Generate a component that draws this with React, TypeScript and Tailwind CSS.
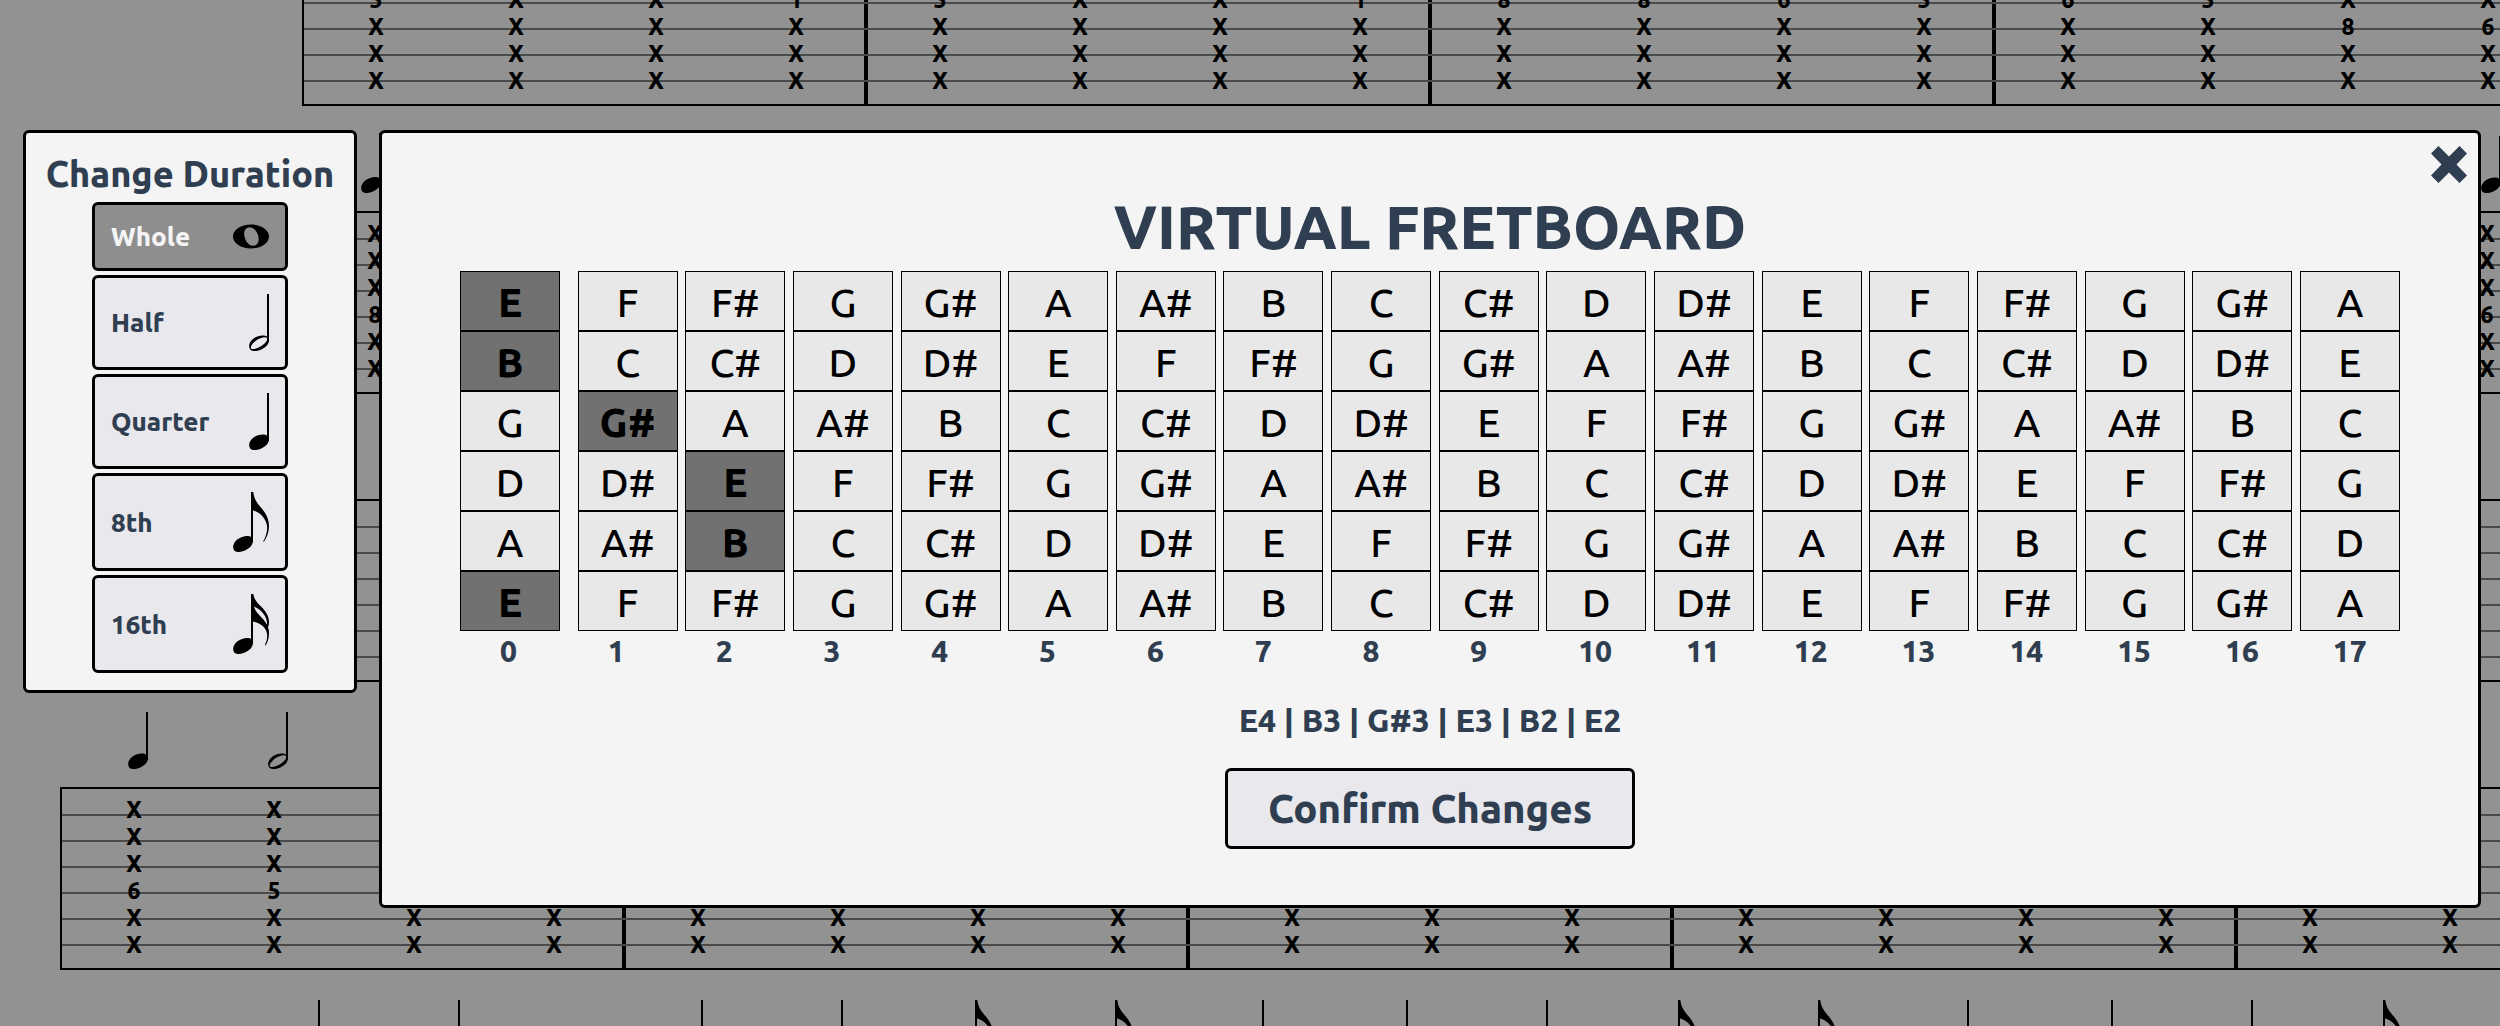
import React from "react";

type Duration = "whole" | "half" | "quarter" | "eighth" | "sixteenth";
type Beat = { d?: Duration; frets?: string };
type Measure = { beats: Beat[] };

function NoteIcon({ kind }: { kind: Duration }) {
  if (kind === "whole")
    return (
      <svg width="36" height="25" viewBox="0 0 36 25" className="shrink-0" aria-hidden="true">
        <path
          fillRule="evenodd"
          d="M18 .5C28 .5 36 5.800 36 12.500S28 24.500 18 24.500 0 19.200 0 12.500 8 .5 18 .5ZM15.500 3.400C11.800 4 10.600 7.500 11.400 12 12.300 17.500 16 22 20.500 21.700 24.800 21.300 26.400 17.500 25.400 12.500 24.300 7 20 2.700 15.500 3.400Z"
        />
      </svg>
    );
  if (kind === "half")
    return (
      <svg width="20" height="57" viewBox="0 0 20 57" className="shrink-0" aria-hidden="true">
        <path d="M18 0H20V48H18Z" />
        <path
          fillRule="evenodd"
          d="M1.200 55.500C-1 52.500.3 47.500 4.500 44.500 9 41.200 15.500 40.500 18.500 43 21 45.500 20.200 50 16 53.300 11.500 57 3.800 58.500 1.200 55.500ZM2.200 54.500C3.700 56 9.500 54 13.500 51.200 17.500 48.400 19.300 45.300 18 43.900 16.300 42.300 10.500 44 6.800 46.800 3 49.600 .9 53.200 2.200 54.500Z"
        />
      </svg>
    );
  if (kind === "quarter")
    return (
      <svg width="20" height="57" viewBox="0 0 20 57" className="shrink-0" aria-hidden="true">
        <path d="M18 0H20V48H18Z" />
        <path d="M1.200 55.500C-1 52.500.3 47.500 4.500 44.500 9 41.200 15.500 40.500 18.500 43 21 45.500 20.200 50 16 53.300 11.500 57 3.800 58.500 1.200 55.500Z" />
      </svg>
    );
  return (
    <svg width="36" height="60" viewBox="0 0 36 60" className="shrink-0" aria-hidden="true">
      <path d="M18 0H20V50H18Z" />
      <path d="M1.200 58.500C-1 55.500.3 50.500 4.500 47.300 9 44 15.500 42.800 18.700 45.500 21 48 20.200 52.500 16 56 11.500 59.800 3.800 61.500 1.200 58.500Z" />
      {kind === "eighth" ? (
        <path d="M19 0H20.300C20.800 5.500 23 10 27.500 15 33 21 36 27 36 34 36 40 34 45 30.800 50L30.200 49.600C33 44.500 34.500 39.500 34 34 33.300 27 27 20 19 18Z" />
      ) : (
        <path
          fillRule="evenodd"
          d="M19 0H20.300C21 5 24 8.500 28 12.500 33 17.500 36 22 36 28 36 30 35.600 32 35 33.500 36 36 36.200 38 36 40 35.800 45 34.500 48.500 32.500 51.500L31.800 51C33.800 47 34.600 43.500 34 39.500 33 33.500 27 28.500 19 27.500ZM21 12.500C22 16.500 25 20 28.500 23.500 31 26 32.800 28.500 33.900 30.800 35 24.500 29.500 16 21 12.500Z"
        />
      )}
    </svg>
  );
}

const b = (frets: string, d?: Duration): Beat => ({ d, frets });
const ALL = "XXXXXX";
const LOW = "    XX";
const empty: Beat = {};

const systems: { lead: string; measures: Measure[] }[] = [
  {
    lead: "w-[302px]",
    measures: [
      { beats: [b("  5XXX"), b("  XXXX"), b("  XXXX"), b("  1XXX")] },
      { beats: [b("  5XXX"), b("  XXXX"), b("  XXXX"), b("  1XXX")] },
      { beats: [b("  8XXX"), b("  8XXX"), b("  6XXX"), b("  5XXX")] },
      { beats: [b("  6XXX"), b("  5XXX"), b("  X8XX"), b("  X6XX")] },
    ],
  },
  {
    lead: "w-[301px]",
    measures: [
      { beats: [b("XXX8XX", "eighth"), empty, empty, empty] },
      { beats: [empty, empty, empty, empty] },
      { beats: [empty, empty, empty, empty] },
      { beats: [empty, empty, empty, b("XXX6XX", "quarter")] },
    ],
  },
  {
    lead: "w-[60px]",
    measures: [
      { beats: [empty, empty, empty, empty] },
      { beats: [empty, empty, empty, empty] },
      { beats: [empty, empty, empty, empty] },
      { beats: [empty, empty, empty, empty] },
      { beats: [empty, empty, empty, empty] },
    ],
  },
  {
    lead: "w-[60px]",
    measures: [
      { beats: [b("XXX6XX", "quarter"), b("XXX5XX", "half"), b(LOW), b(LOW)] },
      { beats: [b(LOW), b(LOW), b(LOW), b(LOW)] },
      { beats: [b(LOW), b(LOW), b(LOW)] },
      { beats: [b(LOW), b(LOW), b(LOW), b(LOW)] },
      { beats: [b(LOW), b(LOW), b(ALL), b(ALL)] },
    ],
  },
];

function MeasureBox({ m }: { m: Measure }) {
  const three = m.beats.length === 3;
  return (
    <div className={three ? "w-[484px] shrink-0" : "w-[564px] shrink-0"}>
      <div
        className={
          three ? "flex h-[75px] items-end pb-[18px] pl-[32px]" : "flex h-[75px] items-end pb-[18px] pl-[2px]"
        }
      >
        {m.beats.map((n, i) => (
          <div key={i} className="flex w-[140px] shrink-0 justify-center pl-2">
            {n.d && <NoteIcon kind={n.d} />}
          </div>
        ))}
      </div>
      <div
        className={
          three
            ? "flex h-[183px] border-r-4 border-black pt-[9px] pl-[32px]"
            : "flex h-[183px] border-r-4 border-black pt-[9px] pl-[2px]"
        }
      >
        {m.beats.map((n, i) => (
          <div key={i} className="w-[140px] shrink-0 text-center text-[23px] leading-[27px] font-extrabold">
            {(n.frets ?? "").split("").map((f, j) => (
              <div key={j} className="relative h-[27px]">
                {f}
              </div>
            ))}
          </div>
        ))}
      </div>
    </div>
  );
}

function System({ lead, measures }: { lead: string; measures: Measure[] }) {
  return (
    <div className="flex h-[288px] shrink-0">
      <div className={lead + " shrink-0"} />
      <div className="relative flex pl-0.5">
        <div className="absolute inset-x-0 top-[75px] flex h-[183px] flex-col gap-6 border-2 border-black pt-[25px]">
          {[0, 1, 2, 3, 4, 5].map((s) => (
            <div key={s} className="h-0.5 shrink-0 bg-[#4a4a4a]" />
          ))}
        </div>
        {measures.map((m, i) => (
          <MeasureBox key={i} m={m} />
        ))}
      </div>
    </div>
  );
}

const nextLine: { gap: string; d: Duration }[] = [
  { gap: "ml-[300px]", d: "quarter" },
  { gap: "ml-[120px]", d: "quarter" },
  { gap: "ml-[223px]", d: "quarter" },
  { gap: "ml-[120px]", d: "quarter" },
  { gap: "ml-[114px]", d: "eighth" },
  { gap: "ml-[104px]", d: "eighth" },
  { gap: "ml-[111px]", d: "quarter" },
  { gap: "ml-[124px]", d: "quarter" },
  { gap: "ml-[120px]", d: "quarter" },
  { gap: "ml-[112px]", d: "eighth" },
  { gap: "ml-[104px]", d: "eighth" },
  { gap: "ml-[113px]", d: "quarter" },
  { gap: "ml-[124px]", d: "quarter" },
  { gap: "ml-[120px]", d: "quarter" },
  { gap: "ml-[112px]", d: "eighth" },
];

const durations: { label: string; kind: Duration }[] = [
  { label: "Whole", kind: "whole" },
  { label: "Half", kind: "half" },
  { label: "Quarter", kind: "quarter" },
  { label: "8th", kind: "eighth" },
  { label: "16th", kind: "sixteenth" },
];

const SCALE = ["C", "C#", "D", "D#", "E", "F", "F#", "G", "G#", "A", "A#", "B"];
const OPEN = [4, 11, 7, 2, 9, 4];
const SELECTED = [0, 0, 1, 2, 2, 0];
const FRETS = Array.from({ length: 18 }, (_, i) => i);

function DurationPanel() {
  return (
    <section className="flex w-[334px] shrink-0 flex-col items-center rounded-md border-3 border-black bg-[#f4f4f4] pt-4 pb-[17px]">
      <h2 className="mb-1 text-[36px] leading-[49px] font-extrabold whitespace-nowrap">Change Duration</h2>
      <div className="flex w-[196px] flex-col gap-1">
        {durations.map(({ label, kind }) => (
          <button
            key={label}
            type="button"
            className={
              kind === "whole"
                ? "flex items-center justify-between rounded-md border-3 border-black bg-[#8e8e8e] px-4 py-4 text-[26px] leading-[31px] font-extrabold text-[#f4f4f4]"
                : "flex items-center justify-between rounded-md border-3 border-black bg-[#e9e8ed] px-4 py-4 text-[26px] leading-[31px] font-extrabold"
            }
          >
            <span>{label}</span>
            <span className="text-black">
              <NoteIcon kind={kind} />
            </span>
          </button>
        ))}
      </div>
    </section>
  );
}

function Fretboard() {
  return (
    <section className="relative flex min-w-0 flex-1 flex-col items-center rounded-md border-3 border-black bg-[#f4f4f4] px-[78px] pt-[54px] pb-[56px]">
      <button type="button" aria-label="Close" className="absolute top-[13px] right-[11px]">
        <svg width="36" height="37" viewBox="0 0 36 37" fill="currentColor" aria-hidden="true">
          <path d="M7.500 0 18 10.500 28.500 0 36 7.500 25.500 18.500 36 29.500 28.500 37 18 26.500 7.500 37 0 29.500 10.500 18.500 0 7.500Z" />
        </svg>
      </button>
      <h1 className="mb-1 text-[60px] leading-[80px] font-extrabold whitespace-nowrap">VIRTUAL FRETBOARD</h1>
      <div className="flex w-full justify-between">
        {FRETS.map((f) => (
          <div key={f} className={f === 0 ? "mr-[10px] w-[100px]" : "w-[100px]"}>
            {OPEN.map((o, s) => (
              <button
                key={s}
                type="button"
                className={
                  SELECTED[s] === f
                    ? "block h-[60px] w-full border border-black bg-[#717171] pt-[3px] text-[40px] leading-[54px] font-extrabold text-black"
                    : "block h-[60px] w-full border border-black bg-[#e8e8e8] pt-[3px] text-[40px] leading-[54px] font-medium text-black"
                }
              >
                {SCALE[(o + f) % 12]}
              </button>
            ))}
          </div>
        ))}
      </div>
      <div className="flex w-full justify-between pr-[35px] pl-10 text-[30px] leading-[40px] font-extrabold">
        {FRETS.map((f) => (
          <span key={f} className="w-8">
            {f}
          </span>
        ))}
      </div>
      <p className="mt-[29px] text-[32px] leading-[40px] font-extrabold whitespace-nowrap">
        E4 | B3 | G#3 | E3 | B2 | E2
      </p>
      <button
        type="button"
        className="mt-[28px] h-[81px] w-[410px] rounded-md border-3 border-black bg-[#e9e8ed] text-[40px] leading-[56px] font-extrabold"
      >
        Confirm Changes
      </button>
    </section>
  );
}

export default function App() {
  return (
    <main className="relative h-screen overflow-hidden bg-[#929292] font-['Ubuntu','Noto_Sans',sans-serif] text-black">
      <div className="-mt-[152px] flex flex-col">
        {systems.map((s, i) => (
          <System key={i} lead={s.lead} measures={s.measures} />
        ))}
        <div className="flex items-start">
          {nextLine.map((s, i) => (
            <div key={i} className={s.gap + " shrink-0"}>
              <NoteIcon kind={s.d} />
            </div>
          ))}
        </div>
      </div>
      <div className="absolute inset-0 flex items-start gap-[22px] pt-[130px] pr-[19px] pl-[23px] text-[#2f3e50]">
        <DurationPanel />
        <Fretboard />
      </div>
    </main>
  );
}
